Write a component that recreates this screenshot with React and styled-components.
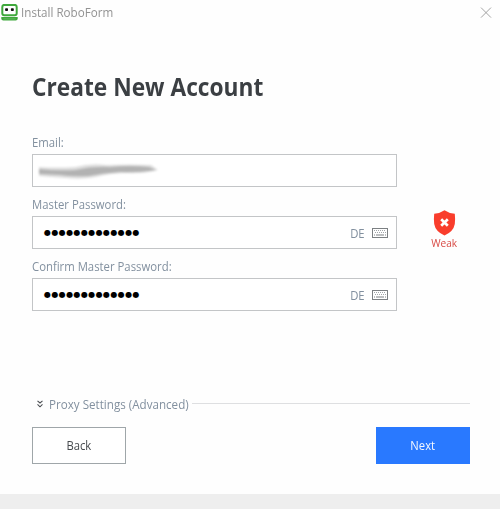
import React from "react";
import styled, { createGlobalStyle } from "styled-components";

const GlobalStyle = createGlobalStyle`
  * { box-sizing: border-box; }
  body { margin: 0; background: #fff; overflow: hidden; }
  button { font: inherit; }
`;

const Window = styled.main`
  width: 500px;
  height: 509px;
  display: flex;
  flex-direction: column;
  background: #fefefe;
  color: #82909f;
  font-family: "Open Sans", "Noto Sans", sans-serif;
  font-size: 13px;
  line-height: 18px;
`;

const TitleBar = styled.header`
  height: 25px;
  display: flex;
  align-items: center;
  padding: 0 8px 0 1px;
  color: #929292;
`;

const AppTitle = styled.span`
  flex: 1;
  margin-left: 3px;
  font-size: 12.5px;
  padding-top: 1px;
  transform: scaleX(0.93);
  transform-origin: left;
`;

const CloseButton = styled.button`
  display: flex;
  padding: 0;
  border: 0;
  background: none;
`;

const Content = styled.section`
  flex: 1;
  display: flex;
  flex-direction: column;
  padding: 45px 30px 0 32px;
`;

const Heading = styled.h1`
  margin: 0;
  height: 63px;
  color: #3b3f43;
  font-size: 24.5px;
  line-height: 34px;
  font-weight: 700;
  white-space: nowrap;
  transform: scaleX(0.928);
  transform-origin: left;
`;

const FormRow = styled.div`
  display: flex;
  height: 262px;
`;

const Fields = styled.div`
  width: 365px;
`;

const Field = styled.div`
  display: flex;
  flex-direction: column;
  height: 62px;
`;

const Label = styled.span`
  height: 21px;
  white-space: nowrap;
  transform: scaleX(0.872);
  transform-origin: left;
`;

const InputBox = styled.span`
  height: 33px;
  display: flex;
  align-items: center;
  padding: 0 8px 0 11px;
  border: 1px solid #c3c5c7;
  background: #fff;
`;

const Dots = styled.span`
  flex: 1;
  color: #000;
  font-family: "DejaVu Sans", sans-serif;
  font-size: 8px;
  line-height: 12px;
  letter-spacing: 0.4px;
`;

const Language = styled.span`
  margin-right: 7px;
  padding-top: 1px;
  transform: scaleX(0.87);
  transform-origin: right;
`;

const Strength = styled.aside`
  width: 50px;
  margin: 77px 0 0 22px;
  display: flex;
  flex-direction: column;
  align-items: center;
  color: #d84a45;
  font-size: 11px;
  line-height: 13px;
`;

const StrengthLabel = styled.span`
  transform: scaleX(0.92);
`;

const ProxyRow = styled.div`
  display: flex;
  align-items: center;
  height: 18px;
  padding-left: 5px;
`;

const ProxyLabel = styled.span`
  width: 143px;
  margin-left: 6px;
  white-space: nowrap;
  transform: scaleX(0.894);
  transform-origin: left;
`;

const Rule = styled.span`
  flex: 1;
  height: 1px;
  margin-bottom: 2px;
  background: #dedfe1;
`;

const Actions = styled.div`
  display: flex;
  justify-content: space-between;
  margin-top: 14px;
`;

const Button = styled.button`
  width: 94px;
  height: 37px;
  padding: 1px 0 0;
  font-size: 12.5px;
  border: 1px solid ${(p) => (p.$primary ? "#2979ff" : "#9fa6a9")};
  background: ${(p) => (p.$primary ? "#2979ff" : "#fff")};
  color: ${(p) => (p.$primary ? "#f4f8ff" : "#45494d")};
`;

const ButtonText = styled.span`
  display: inline-block;
  transform: scaleX(0.9);
`;

const Footer = styled.footer`
  height: 15px;
  background: #eee;
`;

const RoboIcon = () => (
  <svg width="17" height="18" viewBox="0 0 17 18">
    <rect x="1.3" y="0.9" width="14.4" height="10.4" rx="2" fill="#fff" stroke="#3fa83c" strokeWidth="2" />
    <rect x="4.1" y="4.2" width="2.9" height="2.9" rx="0.8" fill="#111" />
    <rect x="9.9" y="4.2" width="2.9" height="2.9" rx="0.8" fill="#111" />
    <path d="M.3 13h16.4v1.5q0 2-2 2H2.3q-2 0-2-2z" fill="#3fa83c" />
    <path d="M2.5 14.9h12" stroke="#72c06f" strokeWidth="0.7" />
  </svg>
);

const CloseIcon = () => (
  <svg width="12" height="12" viewBox="0 0 12 12">
    <path d="M1 .6l10 10M11 .6L1 10.6" stroke="#999" strokeWidth="0.9" />
  </svg>
);

const ScribbleArt = styled.svg`
  margin-left: -9px;
`;

const Scribble = () => (
  <ScribbleArt width="130" height="24" viewBox="-7 0 130 24">
    <defs>
      <filter id="soft" x="-10%" y="-40%" width="120%" height="180%">
        <feGaussianBlur stdDeviation="1.3 0.9" />
      </filter>
    </defs>
    <g filter="url(#soft)">
      <path d="M-3 8Q14 9 33 8Q49 4 64 6Q88 5 109 6L116 11Q100 15 86 14Q69 14 54 18Q40 21 23 19Q8 18-3 17z" fill="#dedede" />
      <path d="M-3 10Q16 12 33 11Q51 7 68 8Q88 6 107 8L114 11Q93 14 79 13Q61 14 47 17Q31 18 18 16L-3 15z" fill="#b2b2b2" />
    </g>
  </ScribbleArt>
);

const KeyboardIcon = () => (
  <svg width="16" height="10" viewBox="0 0 16 10">
    <rect x="0.5" y="0.5" width="15" height="9" fill="#fff" stroke="#7c8083" />
    <path d="M2 2.5h12M3 4.5h11" stroke="#a2a6a9" strokeWidth="1" strokeDasharray="1 1" />
    <path d="M2 7h1M4 7h8M13 7h1" stroke="#7c8083" strokeWidth="1.2" />
  </svg>
);

const ShieldIcon = () => (
  <svg width="23" height="26" viewBox="0 0 23 26">
    <path d="M11.5.3Q16 3.5 21.8 3.7Q22.4 9 21.8 14Q20.5 21.5 11.5 25.5Q2.5 21.5 1.2 14Q.6 9 1.2 3.7Q7 3.5 11.5.3z" fill="#f93d2c" />
    <path d="M8.2 9.2l6.6 6.6M14.8 9.2l-6.6 6.6" stroke="#fff" strokeWidth="2.7" />
  </svg>
);

const ChevronsIcon = () => (
  <svg width="6" height="8" viewBox="0 0 6 8">
    <path d="M.5.8L3 3 5.5.8M.5 4.4L3 6.8 5.5 4.4" fill="none" stroke="#4c5054" strokeWidth="1.1" />
  </svg>
);

const PasswordField = ({ label }) => (
  <Field>
    <Label>{label}</Label>
    <InputBox>
      <Dots>{"●".repeat(13)}</Dots>
      <Language>DE</Language>
      <KeyboardIcon />
    </InputBox>
  </Field>
);

export default function App() {
  return (
    <>
      <GlobalStyle />
      <Window>
        <TitleBar>
          <RoboIcon />
          <AppTitle>Install RoboForm</AppTitle>
          <CloseButton aria-label="Close"><CloseIcon /></CloseButton>
        </TitleBar>
        <Content>
          <Heading>Create New Account</Heading>
          <FormRow>
            <Fields>
              <Field>
                <Label>Email:</Label>
                <InputBox><Scribble /></InputBox>
              </Field>
              <PasswordField label="Master Password:" />
              <PasswordField label="Confirm Master Password:" />
            </Fields>
            <Strength>
              <ShieldIcon />
              <StrengthLabel>Weak</StrengthLabel>
            </Strength>
          </FormRow>
          <ProxyRow>
            <ChevronsIcon />
            <ProxyLabel>Proxy Settings (Advanced)</ProxyLabel>
            <Rule />
          </ProxyRow>
          <Actions>
            <Button><ButtonText>Back</ButtonText></Button>
            <Button $primary><ButtonText>Next</ButtonText></Button>
          </Actions>
        </Content>
        <Footer />
      </Window>
    </>
  );
}
